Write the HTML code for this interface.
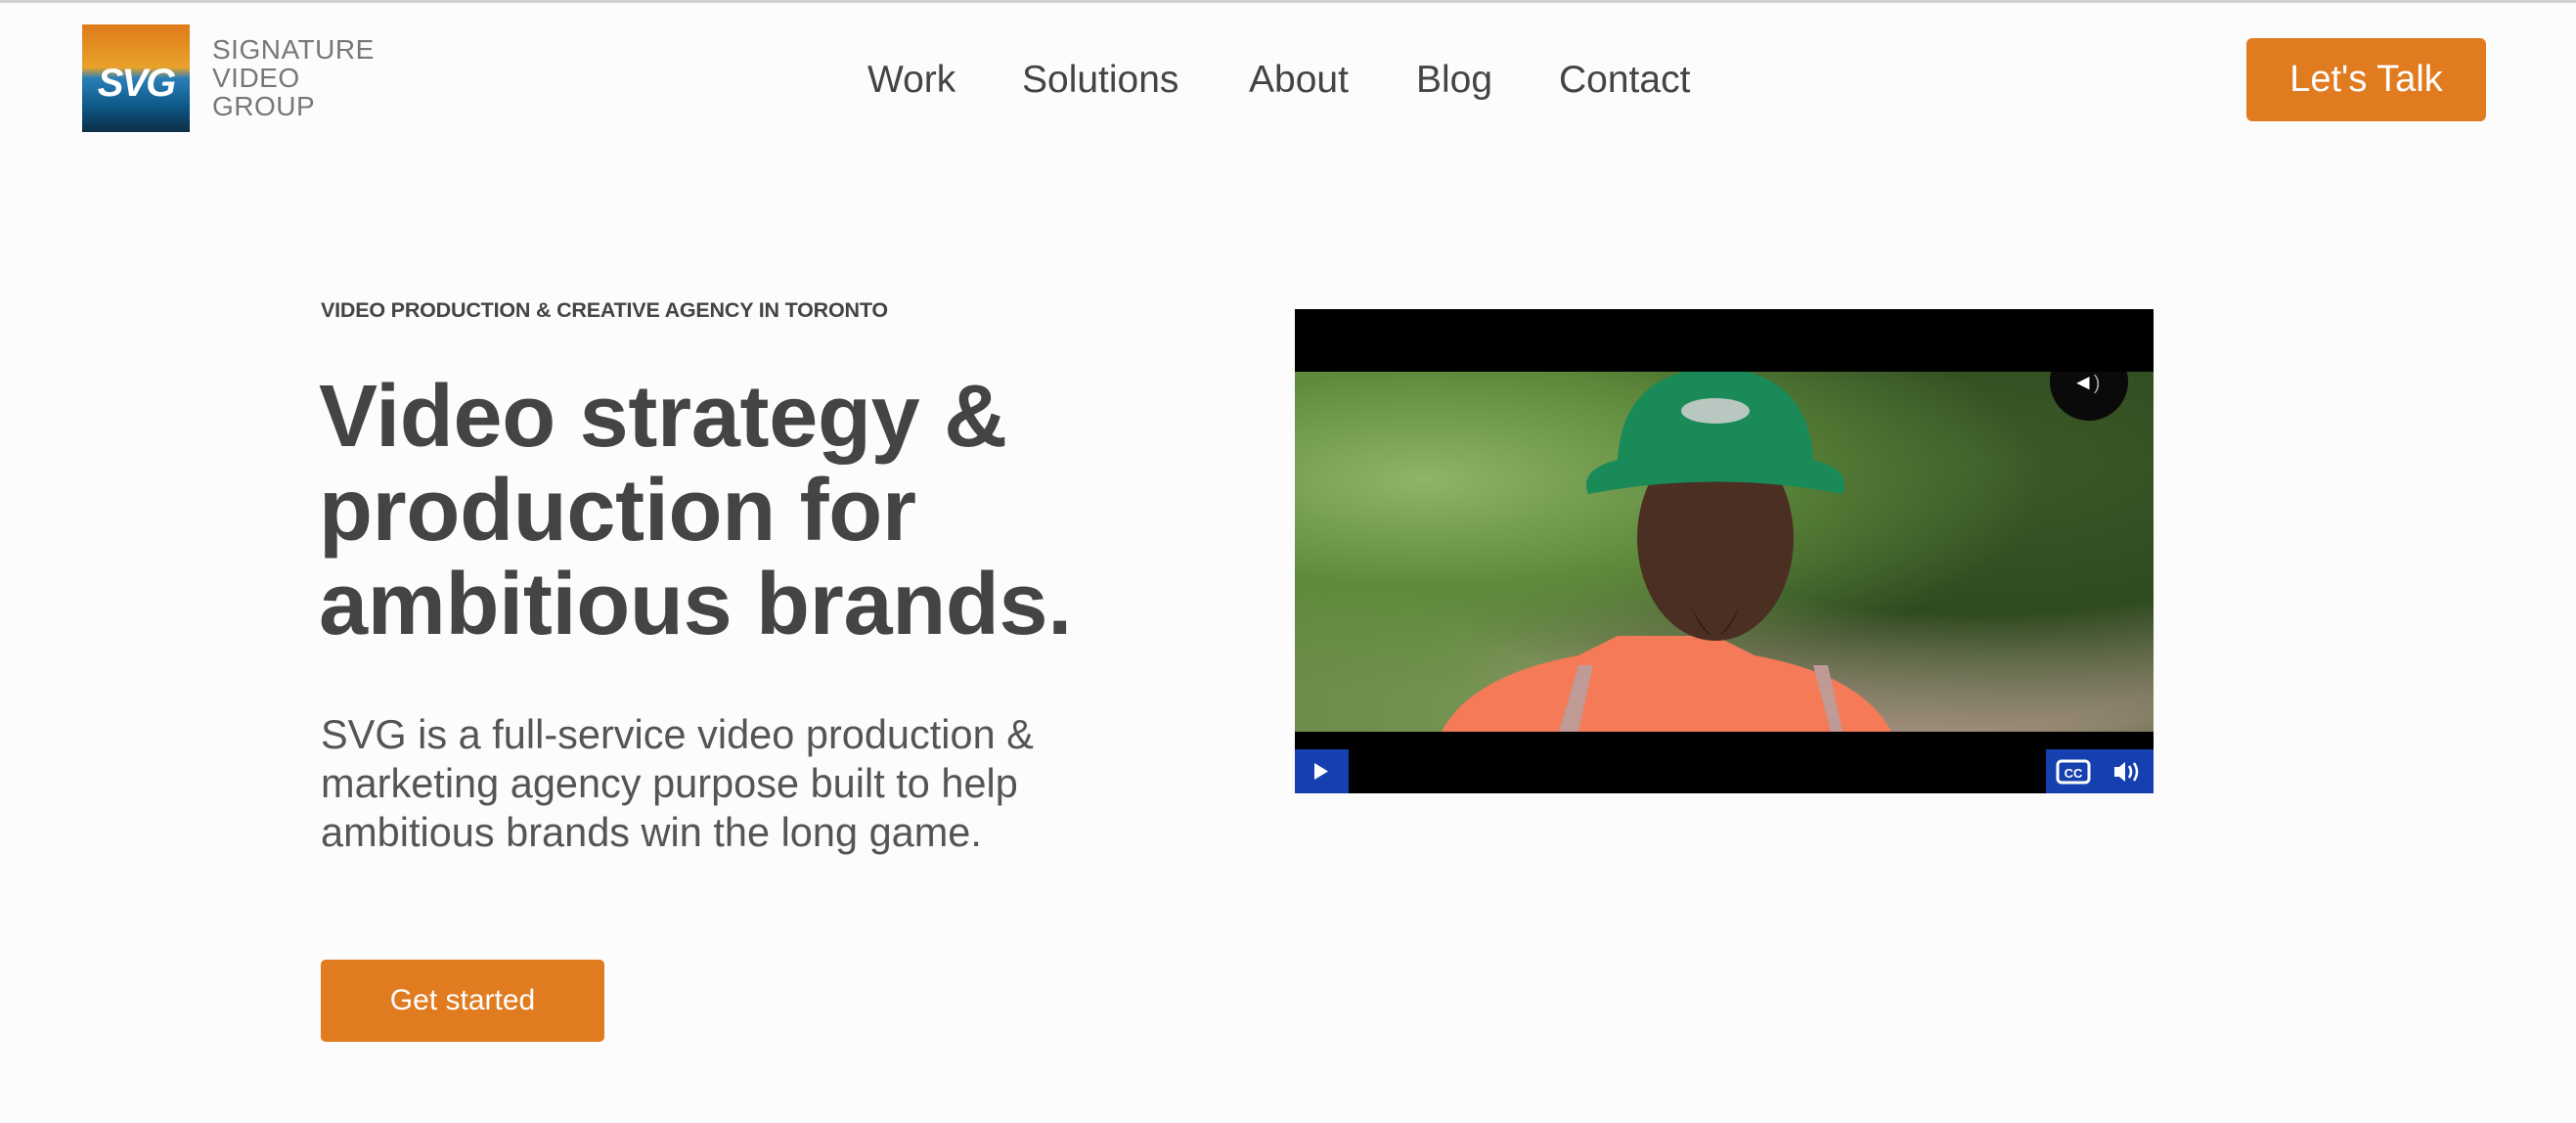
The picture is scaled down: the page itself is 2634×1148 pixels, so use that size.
<!DOCTYPE html>
<html><head><meta charset="utf-8"><style>
*{margin:0;padding:0;box-sizing:border-box}
body{width:2634px;height:1148px;background:#fcfcfc;font-family:"Liberation Sans",sans-serif;color:#444;position:relative;overflow:hidden}
.topline{position:absolute;left:0;top:0;width:100%;height:3px;background:#cfcfcf}
.logo{position:absolute;left:84px;top:25px;width:110px;height:110px;background:linear-gradient(180deg,#e07a1a 0%,#e8a22a 40%,#2b7fb8 50%,#0e5a8a 75%,#0b2e45 100%)}
.logo span{position:absolute;left:0;top:38px;width:110px;text-align:center;color:#fff;font-weight:bold;font-size:40px;letter-spacing:-2px;font-style:italic}
.ltxt{position:absolute;left:217px;top:36px;font-size:28px;line-height:29px;color:#777;letter-spacing:.5px}
.nav{position:absolute;top:60px;font-size:39px;color:#444}
.talk{position:absolute;left:2297px;top:39px;width:245px;height:85px;background:#e07b20;border-radius:6px;color:#fff;font-size:38px;text-align:center;line-height:85px}
.eyebrow{position:absolute;left:328px;top:305px;font-size:21.5px;font-weight:bold;color:#444;letter-spacing:-.2px}
h1{position:absolute;left:326px;top:378px;font-size:90px;line-height:96px;font-weight:bold;color:#444;letter-spacing:-.3px}
p{position:absolute;left:328px;top:726px;font-size:41.5px;line-height:50px;color:#555}
.btn{position:absolute;left:328px;top:981px;width:290px;height:84px;background:#e07b20;border-radius:5px;color:#fff;font-size:30px;text-align:center;line-height:84px}
.video{position:absolute;left:1324px;top:316px;width:878px;height:495px;background:#000;overflow:hidden}
.img{position:absolute;left:0;top:64px;width:878px;height:368px;overflow:hidden;background:radial-gradient(ellipse at 15% 30%,#8fb46a 0,#5f8a3c 30%,transparent 60%),radial-gradient(ellipse at 80% 25%,#3c5a28 0,#2f4a20 40%,transparent 70%),radial-gradient(ellipse at 75% 70%,#b8a494 0,#9a8a78 30%,transparent 55%),linear-gradient(90deg,#6e8c4c,#7a9a58 40%,#b6c4a8 60%,#4e6a34 85%,#405a2a)}
.ctl{position:absolute;top:450px;height:45px;background:#1640b0}
</style></head><body>
<div class="topline"></div>
<div class="logo"><span>SVG</span></div>
<div class="ltxt">SIGNATURE<br>VIDEO<br>GROUP</div>
<div class="nav" style="left:887px">Work</div>
<div class="nav" style="left:1045px">Solutions</div>
<div class="nav" style="left:1277px">About</div>
<div class="nav" style="left:1448px">Blog</div>
<div class="nav" style="left:1594px">Contact</div>
<div class="talk">Let's Talk</div>
<div class="eyebrow">VIDEO PRODUCTION &amp; CREATIVE AGENCY IN TORONTO</div>
<h1>Video strategy &amp;<br>production for<br>ambitious brands.</h1>
<p>SVG is a full-service video production &amp;<br>marketing agency purpose built to help<br>ambitious brands win the long game.</p>
<div class="btn">Get started</div>
<div class="video">
 <div class="img">
  <svg width="878" height="368" viewBox="0 0 878 368">
   <path d="M150 368 Q180 310 290 290 L330 270 L430 270 L470 290 Q580 310 610 368Z" fill="#f47a58"/>
   <path d="M270 368 L290 300 L305 300 L290 368Z M560 368 L545 300 L530 300 L548 368Z" fill="#c09a94"/>
   <ellipse cx="430" cy="170" rx="80" ry="105" fill="#4a2f22"/>
   <path d="M405 240 Q430 300 455 240 Q440 270 430 270 Q420 270 405 240Z" fill="#1a1210"/>
   <path d="M300 125 Q290 100 330 90 Q335 0 430 -5 Q525 0 530 90 Q570 100 560 125 Q430 100 300 125Z" fill="#1a8a58"/>
   <ellipse cx="430" cy="40" rx="35" ry="13" fill="#b8c8c0"/>
  </svg>
  <div style="position:absolute;left:772px;top:-30px;width:80px;height:80px;border-radius:50%;background:#0a0a0a"></div>
  <div style="position:absolute;left:795px;top:-2px;color:#fff;font-size:22px">&#9668;<span style="font-size:20px;color:#aaa">)</span></div>
 </div>
 <div class="ctl" style="left:0;width:55px"><svg width="55" height="45"><path d="M20 14 L34 22.5 L20 31Z" fill="#fff"/></svg></div>
 <div class="ctl" style="right:0;width:110px"><svg width="110" height="45"><rect x="12" y="12" width="32" height="22" rx="4" fill="none" stroke="#fff" stroke-width="3"/><text x="28" y="29" font-size="13" font-weight="bold" fill="#fff" text-anchor="middle" font-family="Liberation Sans">CC</text><path d="M70 18h5l6-5v20l-6-5h-5Z" fill="#fff"/><path d="M85 17q4 6 0 12M90 14q6 9 0 18" stroke="#fff" stroke-width="2.5" fill="none"/></svg></div>
</div>
</body></html>
